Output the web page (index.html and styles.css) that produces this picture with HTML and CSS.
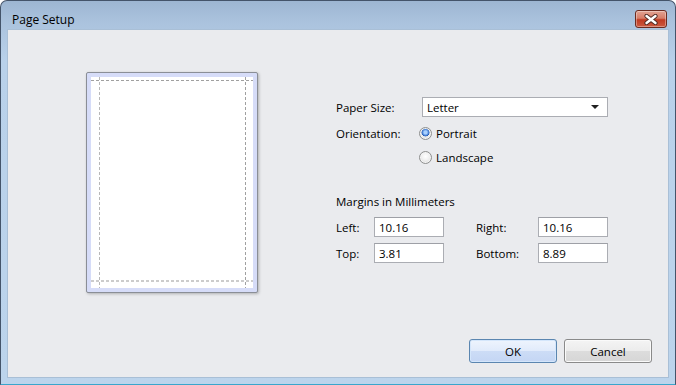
FILE: index.html
```html
<!DOCTYPE html>
<html lang="en">
<head>
    <meta charset="UTF-8">
    <title>Page Setup</title>
    <link rel="stylesheet" href="styles.css">
</head>
<body>
    <div class="window">
        <div class="titlebar">
            <span class="title">Page Setup</span>
            <button class="close" type="button" aria-label="Close">
                <svg width="16" height="11" viewBox="0 0 16 11">
                    <path d="M3.5 2 L12.5 9 M12.5 2 L3.5 9" stroke="#4e2a24" stroke-width="4.2" stroke-linecap="round"/>
                    <path d="M3.5 2 L12.5 9 M12.5 2 L3.5 9" stroke="#ffffff" stroke-width="2.4" stroke-linecap="round"/>
                </svg>
            </button>
        </div>
        <div class="client">
            <div class="main">
                <div class="preview">
                    <div class="sheet">
                        <div class="margin-h top"></div>
                        <div class="margin-h bottom"></div>
                        <div class="margin-v left"></div>
                        <div class="margin-v right"></div>
                    </div>
                </div>
                <div class="form">
                    <div class="row">
                        <span class="label">Paper Size:</span>
                        <div class="combo">
                            <span>Letter</span>
                            <span class="arrow"></span>
                        </div>
                    </div>
                    <div class="row orient">
                        <span class="label">Orientation:</span>
                        <div class="radios">
                            <label class="radio"><span class="dot checked"></span>Portrait</label>
                            <label class="radio"><span class="dot"></span>Landscape</label>
                        </div>
                    </div>
                    <div class="heading">Margins in Millimeters</div>
                    <div class="margins">
                        <span class="label">Left:</span>
                        <div class="field">10.16</div>
                        <span class="label">Right:</span>
                        <div class="field">10.16</div>
                        <span class="label">Top:</span>
                        <div class="field">3.81</div>
                        <span class="label">Bottom:</span>
                        <div class="field">8.89</div>
                    </div>
                </div>
            </div>
            <div class="footer">
                <button class="button default" type="button">OK</button>
                <button class="button" type="button">Cancel</button>
            </div>
        </div>
    </div>
</body>
</html>
```

FILE: styles.css
```css
html, body {
    margin: 0;
    padding: 0;
    background: #ffffff;
}
body {
    font-family: "Open Sans", "Noto Sans", sans-serif;
    font-size: 11.5px;
    line-height: 17px;
    color: #000000;
}
.window {
    box-sizing: border-box;
    width: 676px;
    height: 385px;
    display: flex;
    flex-direction: column;
    border: 1px solid #44546a;
    border-bottom-color: #39a6cc;
    border-radius: 7px 7px 0 0;
    background: linear-gradient(180deg, #9db6d2 0px, #aac2dd 20px, #b9d1ea 60px, #bcd4ec 100%);
    padding: 0 7px 7px;
}
.titlebar {
    height: 29px;
    display: flex;
    align-items: flex-start;
    justify-content: space-between;
}
.title {
    margin-left: 4px;
    margin-top: 10px;
    font-size: 12px;
}
.close {
    box-sizing: border-box;
    width: 32px;
    height: 18px;
    margin-top: 9px;
    margin-right: 1px;
    padding: 0;
    display: flex;
    align-items: center;
    justify-content: center;
    border: 1px solid #6b2b20;
    border-radius: 3px;
    background: linear-gradient(180deg, #e2a393 0%, #d77d68 45%, #c03a22 55%, #cc5a40 100%);
    box-shadow: inset 0 0 0 1px rgba(255, 255, 255, 0.35);
}
.client {
    flex: 1;
    display: flex;
    flex-direction: column;
    background: #eaebee;
    box-shadow: 0 0 0 1px #a9bfd6;
}
.main {
    flex: 1;
    display: flex;
    padding-top: 42px;
}
.preview {
    box-sizing: border-box;
    width: 172px;
    height: 221px;
    margin-left: 78px;
    padding: 4px;
    border: 1px solid #8a8e96;
    border-radius: 2px;
    background: #d6dcf8;
    box-shadow: 1px 1px 3px rgba(0, 0, 0, 0.25);
}
.sheet {
    position: relative;
    height: 100%;
    background: #ffffff;
}
.margin-h {
    position: absolute;
    left: 0;
    right: 0;
    height: 1px;
    background: repeating-linear-gradient(90deg, #a0a0a0 0 3px, transparent 3px 5px);
}
.margin-h.top { top: 3px; }
.margin-h.bottom {
    bottom: 6px;
    height: 2px;
    background: repeating-linear-gradient(90deg, #cccccc 0 3px, transparent 3px 5px);
}
.margin-v {
    position: absolute;
    top: 0;
    bottom: 0;
    width: 1px;
    background: repeating-linear-gradient(180deg, #b8b8b8 0 3px, transparent 3px 5px);
}
.margin-v.left { left: 8px; }
.margin-v.right {
    right: 7px;
    background: repeating-linear-gradient(180deg, #a0a0a0 0 3px, transparent 3px 5px);
}
.form {
    margin-left: 78px;
    padding-top: 25px;
    display: flex;
    flex-direction: column;
}
.row {
    display: flex;
    align-items: center;
}
.row .label {
    width: 86px;
}
.combo {
    box-sizing: border-box;
    width: 186px;
    height: 20px;
    display: flex;
    align-items: center;
    justify-content: space-between;
    padding: 0 8px 0 4px;
    border: 1px solid #abadb3;
    background: #ffffff;
}
.arrow {
    width: 0;
    height: 0;
    border-left: 4px solid transparent;
    border-right: 4px solid transparent;
    border-top: 4px solid #202020;
}
.orient {
    align-items: flex-start;
    margin-top: 8px;
}
.radios {
    display: flex;
    flex-direction: column;
    gap: 7px;
    margin-left: -3px;
}
.radio {
    display: flex;
    align-items: center;
    gap: 4px;
    height: 17px;
}
.dot {
    box-sizing: border-box;
    width: 13px;
    height: 13px;
    border-radius: 50%;
    border: 1px solid #8e8f8f;
    background: radial-gradient(circle at 50% 40%, #ffffff 0%, #f0f0f0 45%, #cfcfcf 100%);
    box-shadow: inset 0 0 0 1px #f4f4f4;
}
.dot.checked {
    background:
        radial-gradient(circle at 50% 40%, #a8d0ff 0 1.5px, #4b84d8 3px, #2a5cb0 3.8px, transparent 4.3px),
        radial-gradient(circle at 50% 40%, #ffffff 0%, #f0f0f0 45%, #cfcfcf 100%);
}
.heading {
    margin-top: 27px;
}
.margins {
    display: grid;
    grid-template-columns: 38px 70px 32px 62px 70px;
    grid-template-rows: 20px 20px;
    row-gap: 6px;
    margin-top: 7px;
    align-items: center;
}
.margins .label:nth-child(3),
.margins .label:nth-child(7) {
    grid-column: 4;
}
.margins .field:nth-child(4),
.margins .field:nth-child(8) {
    grid-column: 5;
}
.field {
    box-sizing: border-box;
    height: 20px;
    padding: 0 4px;
    display: flex;
    align-items: center;
    border: 1px solid #abadb3;
    border-top-color: #9ea0a6;
    background: #ffffff;
}
.footer {
    display: flex;
    justify-content: flex-end;
    gap: 7px;
    padding: 0 16px 14px;
}
.button {
    box-sizing: border-box;
    width: 88px;
    height: 24px;
    padding: 0;
    font-family: inherit;
    font-size: 11.5px;
    color: #000000;
    border: 1px solid #8a8a8a;
    border-radius: 3px;
    background: linear-gradient(180deg, #f4f4f4 0%, #ececec 48%, #dcdcdc 52%, #d6d6d6 100%);
    box-shadow: inset 0 0 0 1px #fafafa;
}
.button.default {
    border-color: #5b86b0;
    background: linear-gradient(180deg, #eef4fd 0%, #e1ebfb 48%, #ccdcf6 52%, #c4d6f4 100%);
    box-shadow: inset 0 0 0 1px #d4e6fb;
}
```
